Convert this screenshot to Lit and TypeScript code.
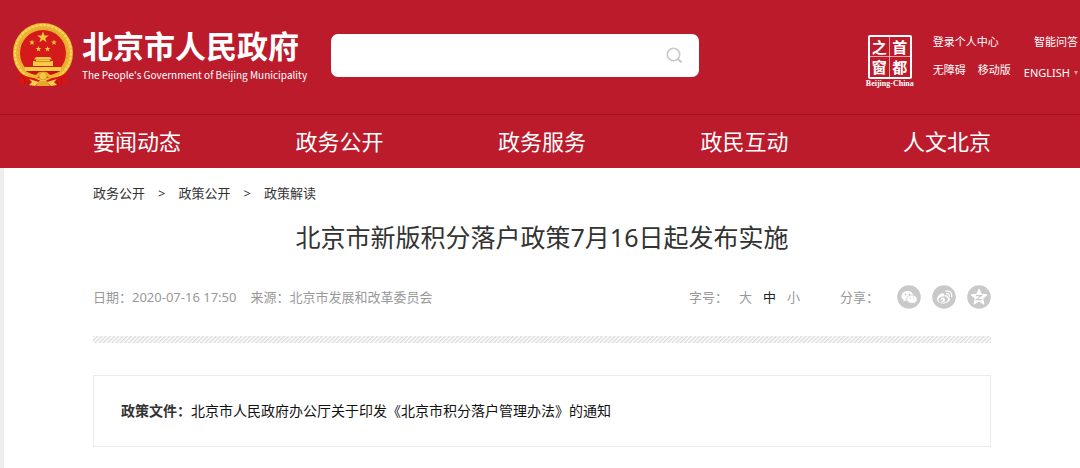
import { LitElement, html, css, svg } from "lit";
import { customElement, property, state } from "lit/decorators.js";

const STAR = "M0-5L1.2-1.6L4.8-1.6L1.9.6L3 4L0 1.9L-3 4L-1.9.6L-4.8-1.6L-1.2-1.6Z";

@customElement("national-emblem")
class NationalEmblem extends LitElement {
  static styles = css`
    :host { display: block; flex: none; width: 62px; height: 64px; }
    .art { display: block; width: 100%; height: 100%; }
  `;
  render() {
    const star = (x: number, y: number, s: number) =>
      svg`<path d=${STAR} transform="translate(${x} ${y}) scale(${s})" fill="#f5c93b"></path>`;
    return html`<svg class="art" viewBox="0 0 62 64" role="img" aria-label="国徽">
      <circle cx="31" cy="30" r="26.500" fill="#d51a1b" stroke="#edb233" stroke-width="7"></circle>
      <circle cx="31" cy="30" r="28" fill="none" stroke="#f8d95c" stroke-width="2" stroke-dasharray="3 1"></circle>
      <circle cx="31" cy="30" r="24" fill="none" stroke="#e09e2c" stroke-width="1" stroke-dasharray="2 2"></circle>
      ${star(31, 14.5, 1.2)} ${star(20, 19.5, 0.6)} ${star(42, 19.5, 0.6)}
      ${star(26.5, 26, 0.6)} ${star(35.5, 26, 0.6)}
      <path d="M24 34H38L40 36.500H22Z" fill="#f6cb45"></path>
      <path d="M24 36.500H38V38H41V43H21V38H24Z" fill="#f6cb45"></path>
      <path d="M13 44H49V48H13Z" fill="#f6cb45"></path>
      <path d="M23 38.500H39" stroke="#cf7a1f" fill="none" stroke-width=".8"></path>
      <path d="M13 48H49Q42 55 31 55Q20 55 13 48Z" fill="#c81316"></path>
      <path d="M5 45Q8 53 22 55L31 59L40 55Q54 53 57 45L56 52L53 53L55 60Q52 63 48 61Q44 60 42 62H20Q18 60 14 61Q10 63 7 60L9 53L6 52Z" fill="#d8150f"></path>
      <path d="M9 52Q14 56 13 61M18 55L16 61M53 52Q48 56 49 61M44 55L46 61" stroke="#b01212" fill="none"></path>
      <path d="M10 46Q18 51 24 52Q27 48 31 49Q35 48 38 52Q44 51 52 46Q47 54 39 55Q35 53 31 53Q27 53 23 55Q15 54 10 46Z" fill="#efb52e"></path>
      <circle cx="31" cy="53" r="4" fill="#f3c544" stroke="#cf8a1f" stroke-width=".6"></circle>
      <path d="M17 56L27 59L23 63L17 62L20 59ZM45 56L35 59L39 63L45 62L42 59Z" fill="#f6d04c"></path>
      <path d="M27 58H35L38 63H24Z" fill="#e8a62a"></path>
    </svg>`;
  }
}

@customElement("capital-window")
class CapitalWindow extends LitElement {
  static styles = css`
    :host { display: block; flex: none; width: 50px; }
    .seal {
      display: grid; grid-template: 1fr 1fr / 1fr 1fr; box-sizing: border-box;
      width: 44px; height: 44px; margin: 0 auto;
      border: 2px solid #fff; border-radius: 2px;
      font: 700 15px/19px "Noto Sans CJK SC", sans-serif; text-align: center;
    }
    .cell:nth-child(odd) { border-right: 1px solid #f0a5ab; }
    .cell:nth-child(-n + 2) { border-bottom: 1px solid #f0a5ab; }
    .latin { font: 700 8px/9px "Liberation Serif", serif; text-align: center; white-space: nowrap; }
  `;
  render() {
    return html`<div class="seal">
        ${["之", "首", "窗", "都"].map((c) => html`<span class="cell">${c}</span>`)}
      </div>
      <div class="latin">Beijing-China</div>`;
  }
}

@customElement("share-icon")
class ShareIcon extends LitElement {
  @property() kind = "wechat";
  static styles = css`
    :host { display: block; width: 24px; height: 24px; }
    .art { display: block; width: 100%; height: 100%; }
  `;
  glyph() {
    if (this.kind === "wechat")
      return svg`<path d="M10.500 6C7 6 4.500 8.200 4.500 10.900C4.500 12.500 5.300 13.800 6.700 14.700L6.200 16.500L8.200 15.500Q9.300 15.900 10.500 15.800C15 15.700 16.500 13 16.400 10.700C16.200 8 13.600 6 10.500 6Z" fill="#fff"></path>
        <path d="M15 10C18 10 20.200 11.900 20.200 14.200C20.200 15.500 19.500 16.600 18.400 17.300L18.800 18.900L17 18Q16 18.300 15 18.300C12 18.300 9.700 16.500 9.700 14.200C9.700 11.900 12 10 15 10Z" fill="#fff" stroke="#c9c9c9" stroke-width=".8"></path>
        <g fill="#c9c9c9"><circle cx="8.500" cy="9.500" r=".9"></circle><circle cx="12.300" cy="9.500" r=".9"></circle><circle cx="13.300" cy="13.100" r=".7"></circle><circle cx="16.700" cy="13.100" r=".7"></circle></g>`;
    if (this.kind === "weibo")
      return svg`<path d="M10.800 8.200C8.500 8 5 11.400 5 14C5 17 8.200 18.500 11.300 18.500C15 18.500 18 16.300 18 14.100C18 12.700 16.900 12.100 15.900 11.900C16.500 10.500 15.300 9.600 12.200 10.700C12.700 9.300 12.200 8.300 10.800 8.200Z" fill="#fff"></path>
        <ellipse cx="11.200" cy="14.500" rx="4.700" ry="3.100" transform="rotate(-8 11.200 14.500)" fill="#c9c9c9"></ellipse>
        <circle cx="10.800" cy="14.700" r="2.300" fill="#fff"></circle>
        <circle cx="10" cy="15.200" r=".9" fill="#c9c9c9"></circle>
        <path d="M14.500 8.700Q17.500 8.200 17.300 11.200M14 6.200Q20.300 5.300 19.700 11.900" stroke="#fff" stroke-width="1.200" stroke-linecap="round" fill="none"></path>`;
    return svg`<path d="M12 4L14.300 9.200L20 9.800L15.700 13.500L17 19.200L12 16.200L7 19.200L8.300 13.500L4 9.800L9.700 9.200Z" fill="#fff" stroke="#fff" stroke-linejoin="round"></path>
      <path d="M9 10.600H14.500L9.600 14.600H15" fill="none" stroke="#c9c9c9" stroke-width="1.200"></path>`;
  }
  render() {
    return html`<svg class="art" viewBox="0 0 24 24" aria-hidden="true">
      <circle cx="12" cy="12" r="11.800" fill="#c9c9c9"></circle>${this.glyph()}
    </svg>`;
  }
}

@customElement("app-root")
class AppRoot extends LitElement {
  @state() size = "中";

  static styles = css`
    :host {
      display: block; min-height: 100vh; background: #fff; color: #333;
      font: 13px/20px "Noto Sans", "Noto Sans CJK SC", sans-serif;
    }
    a { color: inherit; text-decoration: none; }
    button { padding: 0; border: 0; background: none; font: inherit; color: inherit; cursor: pointer; }
    .top {
      display: flex; align-items: flex-start; box-sizing: border-box; height: 114px;
      padding-left: 12px; background: #bc1b2c; color: #fff;
    }
    .emblem { margin-top: 23px; }
    .brand { flex: none; width: 249px; margin: 25px 0 0 8px; white-space: nowrap; }
    .name { display: block; font: 700 31px/40px "Noto Sans CJK SC", sans-serif; }
    .english { display: block; font: 10px/20px "Noto Sans CJK SC", sans-serif; }
    .search {
      display: flex; align-items: center; flex: 0 1 368px; box-sizing: border-box; height: 43px;
      margin-top: 34px; padding: 0 16px; border-radius: 7px; background: #fff;
    }
    .field { flex: 1; min-width: 0; border: 0; outline: 0; background: none; font: inherit; }
    .lens { display: block; width: 17px; height: 17px; }
    .tools { display: flex; gap: 18px; margin: 35px 2px 0 auto; }
    .links { display: flex; gap: 13px; font-size: 11px; line-height: 14px; white-space: nowrap; }
    .group { display: flex; flex-direction: column; gap: 14px; }
    .group.end { align-items: flex-end; gap: 17px; }
    .pair { display: flex; gap: 12px; }
    .lang { display: flex; align-items: center; gap: 4px; }
    .caret { border: 2px solid transparent; border-top: 4px solid #d99a86; border-bottom: 0; }
    .nav { padding-left: 4px; border-top: 1px solid #9f1423; background: #bc1b2c; color: #fff; }
    .wrap { max-width: 898px; margin: 0 auto; }
    .menu { display: flex; justify-content: space-between; font-size: 22px; line-height: 53px; }
    .page { min-height: calc(100vh - 168px); box-sizing: border-box; border-left: 4px solid #eee; }
    .crumbs { display: flex; gap: 13px; padding-top: 15px; }
    .title {
      margin: 16px 0 0; font-weight: 400; font-size: 25px; line-height: 36px; text-align: center;
    }
    .meta { display: flex; align-items: center; margin-top: 30px; height: 24px; color: #999; }
    .source { margin-left: 14px; }
    .sizes { display: flex; gap: 11px; margin-left: auto; }
    .size.on { color: #222; }
    .share { display: flex; align-items: center; gap: 11px; margin-left: 40px; }
    .share .label { margin-right: 7px; }
    .hatch {
      height: 7px; margin-top: 27px;
      background: repeating-linear-gradient(135deg, #dcdcdc 0, #fff 2px, #dcdcdc 3px);
    }
    .file {
      margin: 32px 0 0; padding: 25px 27px; border: 1px solid #ecebe6;
      font-size: 14px; line-height: 20px;
    }
    .file .doc { color: #111; }
  `;

  render() {
    const nav = ["要闻动态", "政务公开", "政务服务", "政民互动", "人文北京"];
    return html`
      <header>
        <div class="top">
          <national-emblem class="emblem"></national-emblem>
          <a class="brand" href="#">
            <span class="name">北京市人民政府</span>
            <span class="english">The People's Government of Beijing Municipality</span>
          </a>
          <form class="search" role="search" @submit=${(e: Event) => e.preventDefault()}>
            <input class="field" type="text" aria-label="搜索" />
            <button type="submit" aria-label="搜索">
              <svg class="lens" viewBox="0 0 17 17" fill="none" stroke="#c8c8c8" stroke-width="1.600">
                <circle cx="7.500" cy="7.500" r="6.200"></circle>
                <path d="M12 12L15.500 15.500" stroke-width="2"></path>
              </svg>
            </button>
          </form>
          <div class="tools">
            <capital-window></capital-window>
            <div class="links">
              <div class="group">
                <a href="#">登录个人中心</a>
                <div class="pair"><a href="#">无障碍</a><a href="#">移动版</a></div>
              </div>
              <div class="group end">
                <a href="#">智能问答</a>
                <a class="lang" href="#">ENGLISH<span class="caret"></span></a>
              </div>
            </div>
          </div>
        </div>
        <nav class="nav" aria-label="主导航">
          <div class="wrap menu">${nav.map((n) => html`<a href="#">${n}</a>`)}</div>
        </nav>
      </header>
      <main class="page">
        <div class="wrap">
          <nav class="crumbs" aria-label="当前位置">
            <a href="#">政务公开</a><span>&gt;</span><a href="#">政策公开</a><span>&gt;</span><a href="#">政策解读</a>
          </nav>
          <h1 class="title">北京市新版积分落户政策7月16日起发布实施</h1>
          <div class="meta">
            <span>日期：2020-07-16 17:50</span>
            <span class="source">来源：北京市发展和改革委员会</span>
            <div class="sizes">
              <span class="label">字号：</span>
              ${["大", "中", "小"].map(
                (s) => html`<button class="size ${s === this.size ? "on" : ""}" type="button" @click=${() => (this.size = s)}>${s}</button>`
              )}
            </div>
            <div class="share">
              <span class="label">分享：</span>
              <a href="#" aria-label="微信"><share-icon kind="wechat"></share-icon></a>
              <a href="#" aria-label="微博"><share-icon kind="weibo"></share-icon></a>
              <a href="#" aria-label="QQ空间"><share-icon kind="qzone"></share-icon></a>
            </div>
          </div>
          <div class="hatch"></div>
          <p class="file"><strong>政策文件：</strong><a class="doc" href="#">北京市人民政府办公厅关于印发《北京市积分落户管理办法》的通知</a></p>
        </div>
      </main>
    `;
  }
}
